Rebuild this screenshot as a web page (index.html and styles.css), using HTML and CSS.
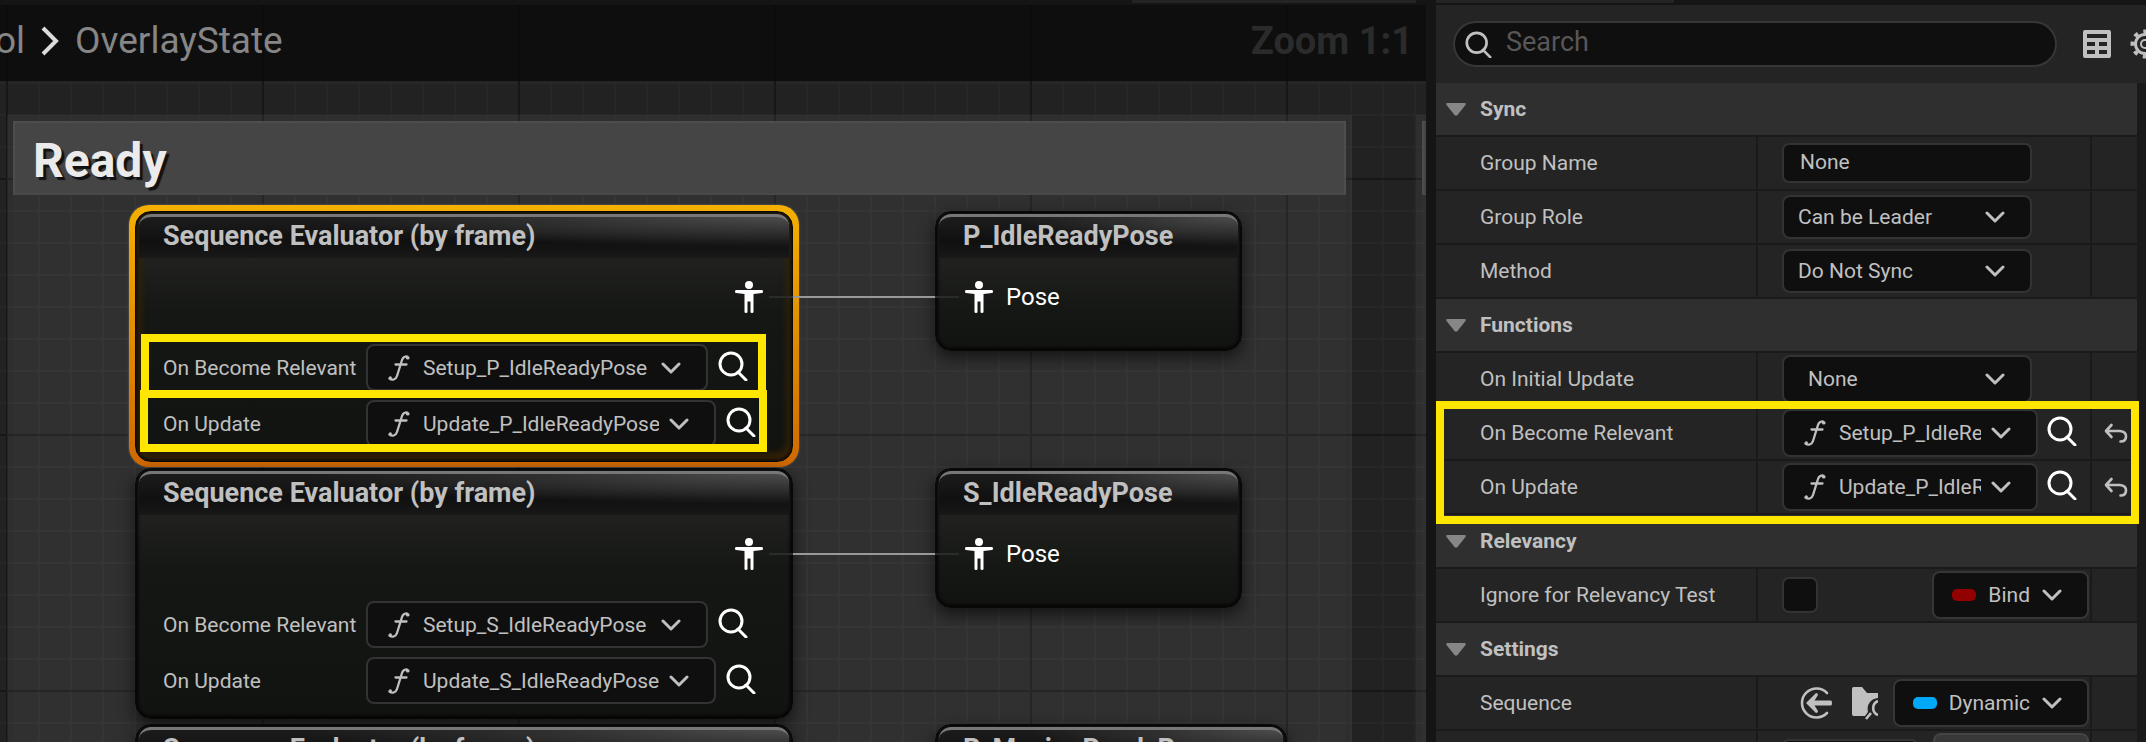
FILE: index.html
```
<!DOCTYPE html>
<html lang="en">
<head>
    <meta charset="UTF-8">
    <meta name="viewport" content="width=device-width, initial-scale=1.0">
    <title>OverlayState</title>
    <link rel="stylesheet" href="styles.css">
</head>
<body>

<!-- Shared icons -->
<svg class="sprite" aria-hidden="true">
    <symbol id="chevron" viewBox="0 0 20 12"><path d="M2 2l8 8 8-8" fill="none" stroke="currentColor" stroke-width="3" stroke-linecap="round" stroke-linejoin="round"/></symbol>
    <symbol id="search" viewBox="0 0 30 30"><circle cx="13" cy="13" r="11" fill="none" stroke="currentColor" stroke-width="3"/><path d="M20 21l8 8" stroke="currentColor" stroke-width="3" stroke-linecap="round"/></symbol>
    <symbol id="func" viewBox="0 0 22 26"><path d="M20.500 3C19.500 1 15.500 .5 14 5L9 21c-1.200 4-5 4.500-7.500 2.500M7.500 9.500h11" fill="none" stroke="currentColor" stroke-width="2.300" stroke-linecap="round"/><circle cx="19.500" cy="3" r="1.600" fill="currentColor"/><circle cx="2.300" cy="22.800" r="1.600" fill="currentColor"/></symbol>
    <symbol id="pose" viewBox="0 0 28 32"><circle cx="14" cy="4" r="4" fill="currentColor"/><path d="M1 9h26q1 0 1 1.500t-1 1.500l-8.500 1v18q0 1-1.500 1t-1.500-1V20.500h-3V31q0 1-1.500 1t-1.500-1V13L1 12q-1 0-1-1.500T1 9z" fill="currentColor"/></symbol>
    <symbol id="undo" viewBox="0 0 24 20"><path d="M7.500 2L2 8l5.500 6M2.500 8H16q6 .5 6 5.500T16.500 18.500" fill="none" stroke="currentColor" stroke-width="2.600" stroke-linecap="round" stroke-linejoin="round"/></symbol>
    <symbol id="arrow-down" viewBox="0 0 20 13"><path d="M1.500 0h17q2 0 1 2l-8 10q-1.500 1.500-3 0L.5 2q-1-2 1-2z" fill="currentColor"/></symbol>
</svg>

<div class="tabs">
    <div class="tab tab-graph"></div>
    <div class="tab tab-details"></div>
</div>

<div class="editor">
    <main class="graph">
        <!-- Comment boxes -->
        <section class="comment comment-ready">
            <h2>Ready</h2>
        </section>
        <section class="comment comment-next"></section>

        <!-- Left nodes -->
        <div class="selection">
            <article class="node">
                <h3>Sequence Evaluator (by frame)</h3>
                <div class="pin pin-out"><svg class="pose"><use href="#pose"/></svg></div>
                <div class="node-row">
                    <label for="p_relevant">On Become Relevant</label>
                    <div class="picker node-picker">
                        <select id="p_relevant"><option>Setup_P_IdleReadyPose</option></select>
                        <svg class="func"><use href="#func"/></svg>
                        <svg class="chevron"><use href="#chevron"/></svg>
                    </div>
                    <button class="icon-btn" aria-label="Find"><svg class="search"><use href="#search"/></svg></button>
                </div>
                <div class="node-row">
                    <label for="p_update">On Update</label>
                    <div class="picker node-picker wide">
                        <select id="p_update"><option>Update_P_IdleReadyPose</option></select>
                        <svg class="func"><use href="#func"/></svg>
                        <svg class="chevron"><use href="#chevron"/></svg>
                    </div>
                    <button class="icon-btn" aria-label="Find"><svg class="search"><use href="#search"/></svg></button>
                </div>
            </article>
        </div>

        <article class="node node-s">
            <h3>Sequence Evaluator (by frame)</h3>
            <div class="pin pin-out"><svg class="pose"><use href="#pose"/></svg></div>
            <div class="node-row">
                <label for="s_relevant">On Become Relevant</label>
                <div class="picker node-picker">
                    <select id="s_relevant"><option>Setup_S_IdleReadyPose</option></select>
                    <svg class="func"><use href="#func"/></svg>
                    <svg class="chevron"><use href="#chevron"/></svg>
                </div>
                <button class="icon-btn" aria-label="Find"><svg class="search"><use href="#search"/></svg></button>
            </div>
            <div class="node-row">
                <label for="s_update">On Update</label>
                <div class="picker node-picker wide">
                    <select id="s_update"><option>Update_S_IdleReadyPose</option></select>
                    <svg class="func"><use href="#func"/></svg>
                    <svg class="chevron"><use href="#chevron"/></svg>
                </div>
                <button class="icon-btn" aria-label="Find"><svg class="search"><use href="#search"/></svg></button>
            </div>
        </article>

        <article class="node node-m">
            <h3>Sequence Evaluator (by frame)</h3>
        </article>

        <!-- Pose nodes -->
        <article class="node result result-p">
            <h3>P_IdleReadyPose</h3>
            <div class="pin"><svg class="pose"><use href="#pose"/></svg>Pose</div>
        </article>
        <article class="node result result-s">
            <h3>S_IdleReadyPose</h3>
            <div class="pin"><svg class="pose"><use href="#pose"/></svg>Pose</div>
        </article>
        <article class="node result result-m">
            <h3>P_MovingReadyPose</h3>
        </article>

        <!-- Wires -->
        <div class="wire wire-p"></div>
        <div class="wire wire-s"></div>

        <div class="mark mark-relevant"></div>
        <div class="mark mark-update"></div>

        <header class="title-bar">
            <nav class="crumbs">
                <a href="#">ol</a>
                <svg class="crumb-sep" viewBox="0 0 20 30"><path d="M3 2l13 13L3 28" fill="none" stroke="#dcdcdc" stroke-width="4"/></svg>
                <a href="#">OverlayState</a>
            </nav>
            <span class="zoom">Zoom 1:1</span>
        </header>
    </main>

    <aside class="details">
        <div class="toolbar">
            <label class="search-box">
                <svg class="search-icon"><use href="#search"/></svg>
                <input type="text" placeholder="Search" aria-label="Search">
            </label>
            <button class="tool-btn" aria-label="Property matrix">
                <svg width="28" height="28" viewBox="0 0 28 28"><path fill="#c0c0c0" fill-rule="evenodd" d="M2 0h24q2 0 2 2v24q0 2-2 2H2q-2 0-2-2V2Q0 0 2 0zM4 4v4h20V4zM4 12v4h8v-4zM16 12v4h8v-4zM4 20v4h8v-4zM16 20v4h8v-4z"/></svg>
            </button>
            <button class="tool-btn" aria-label="Settings">
                <svg width="30" height="30" viewBox="0 0 30 30"><g fill="none" stroke="#c0c0c0"><circle cx="15" cy="15" r="9.500" stroke-width="3"/><circle cx="15" cy="15" r="4" stroke-width="2"/><circle cx="15" cy="15" r="12.500" stroke-width="4" stroke-dasharray="4.200 5.617" stroke-dashoffset="2.100"/></g></svg>
            </button>
        </div>

        <div class="properties">
            <h4><svg class="arrow"><use href="#arrow-down"/></svg>Sync</h4>
            <div class="row">
                <label for="group_name">Group Name</label>
                <div class="value"><input type="text" id="group_name" value="None"></div>
                <div class="reset"></div>
            </div>
            <div class="row">
                <label for="group_role">Group Role</label>
                <div class="value">
                    <div class="picker plain">
                        <select id="group_role"><option>Can be Leader</option></select>
                        <svg class="chevron"><use href="#chevron"/></svg>
                    </div>
                </div>
                <div class="reset"></div>
            </div>
            <div class="row">
                <label for="method">Method</label>
                <div class="value">
                    <div class="picker plain">
                        <select id="method"><option>Do Not Sync</option></select>
                        <svg class="chevron"><use href="#chevron"/></svg>
                    </div>
                </div>
                <div class="reset"></div>
            </div>

            <h4><svg class="arrow"><use href="#arrow-down"/></svg>Functions</h4>
            <div class="row">
                <label for="initial_update">On Initial Update</label>
                <div class="value">
                    <div class="picker none">
                        <select id="initial_update"><option>None</option></select>
                        <svg class="chevron"><use href="#chevron"/></svg>
                    </div>
                </div>
                <div class="reset"></div>
            </div>
            <div class="row">
                <label for="become_relevant">On Become Relevant</label>
                <div class="value">
                    <div class="picker function">
                        <select id="become_relevant"><option>Setup_P_IdleReadyPose</option></select>
                        <svg class="func"><use href="#func"/></svg>
                        <svg class="chevron"><use href="#chevron"/></svg>
                    </div>
                    <button class="icon-btn" aria-label="Find"><svg class="search"><use href="#search"/></svg></button>
                </div>
                <div class="reset"><button class="icon-btn" aria-label="Reset"><svg class="undo"><use href="#undo"/></svg></button></div>
            </div>
            <div class="row">
                <label for="update">On Update</label>
                <div class="value">
                    <div class="picker function">
                        <select id="update"><option>Update_P_IdleReadyPose</option></select>
                        <svg class="func"><use href="#func"/></svg>
                        <svg class="chevron"><use href="#chevron"/></svg>
                    </div>
                    <button class="icon-btn" aria-label="Find"><svg class="search"><use href="#search"/></svg></button>
                </div>
                <div class="reset"><button class="icon-btn" aria-label="Reset"><svg class="undo"><use href="#undo"/></svg></button></div>
            </div>

            <h4><svg class="arrow"><use href="#arrow-down"/></svg>Relevancy</h4>
            <div class="row">
                <label for="ignore_test">Ignore for Relevancy Test</label>
                <div class="value">
                    <input type="checkbox" id="ignore_test">
                    <button class="bind"><span class="pill red"></span>Bind<svg class="chevron"><use href="#chevron"/></svg></button>
                </div>
                <div class="reset"></div>
            </div>

            <h4><svg class="arrow"><use href="#arrow-down"/></svg>Settings</h4>
            <div class="row">
                <span class="row-name">Sequence</span>
                <div class="value">
                    <button class="icon-btn use-asset" aria-label="Use selected asset">
                        <svg width="32" height="32" viewBox="0 0 32 32"><path d="M27 6A14.500 14.500 0 1 0 27 26" fill="none" stroke="#c0c0c0" stroke-width="2.600" stroke-linecap="round"/><path d="M6 16L16 6q2 0 2 2l-3.500 5.500H31q1 0 1 2.500t-1 2.500H14.500L18 24q0 2-2 2z" fill="#c0c0c0"/></svg>
                    </button>
                    <button class="icon-btn browse" aria-label="Browse to asset">
                        <svg width="26" height="33" viewBox="0 0 26 33"><path d="M1.500 0H10l5 6h11v5a11 11 0 0 0-10 14l-3 4H1.500Q0 29 0 27V2Q0 0 1.500 0z" fill="#c0c0c0"/><path d="M26 14a7.500 7.500 0 0 0 0 14M19 26l-5 6" fill="none" stroke="#c0c0c0" stroke-width="2.600"/></svg>
                    </button>
                    <button class="bind"><span class="pill blue"></span>Dynamic<svg class="chevron"><use href="#chevron"/></svg></button>
                </div>
                <div class="reset"></div>
            </div>
            <div class="row">
                <span class="row-name"></span>
                <div class="value">
                    <input type="text" class="frame" aria-label="Value">
                    <button class="bind light" aria-label="Pin"></button>
                </div>
                <div class="reset"></div>
            </div>

            <div class="mark mark-functions"></div>
        </div>
    </aside>
</div>

</body>
</html>
```
FILE: styles.css
```
* {
    box-sizing: border-box;
}
body {
    margin: 0;
    height: 100vh;
    overflow: hidden;
    display: flex;
    flex-direction: column;
    background-color: #151515;
    color: #c0c0c0;
    font-family: Roboto, "Liberation Sans", sans-serif;
    font-size: 21px;
}
button, input, select {
    margin: 0;
    font: inherit;
    color: inherit;
}
h2, h3, h4 {
    margin: 0;
}
svg {
    display: block;
    flex: none;
}
.sprite {
    position: absolute;
    width: 0;
    height: 0;
}

/* Layout */
.tabs {
    display: grid;
    grid-template-columns: 1fr 284px 20px 238px 472px;
    height: 5px;
}
.tab {
    height: 3px;
    background-color: #242424;
}
.tab-graph {
    grid-column: 2;
}
.tab-details {
    grid-column: 4;
}
.editor {
    flex: 1;
    min-height: 0;
    display: grid;
    grid-template-columns: 1fr 710px;
    gap: 10px;
}

/* Graph */
.graph {
    position: relative;
    overflow: hidden;
    background-color: #222;
    background-image:
        linear-gradient(#171717 2px, transparent 2px),
        linear-gradient(90deg, #171717 2px, transparent 2px),
        linear-gradient(#272727 2px, transparent 2px),
        linear-gradient(90deg, #272727 2px, transparent 2px);
    background-size: 256px 256px, 256px 256px, 32px 32px, 32px 32px;
    background-position: 6px 173px, 6px 173px, 6px 13px, 6px 13px;
}
.title-bar {
    position: absolute;
    top: 0;
    left: 0;
    right: 0;
    height: 76px;
    padding: 0 13px 5px 0;
    display: flex;
    align-items: center;
    justify-content: space-between;
    background-color: rgba(8, 8, 8, 0.75);
}
.crumbs {
    display: flex;
    align-items: center;
    gap: 15px;
    margin-left: -5px;
}
.crumbs a {
    color: #868686;
    font-size: 37px;
    text-decoration: none;
}
.crumb-sep {
    width: 20px;
    height: 30px;
}
.zoom {
    color: #2b2b2b;
    font-size: 38px;
    font-weight: bold;
}
.comment {
    position: absolute;
    top: 116px;
    height: 800px;
    background-color: rgba(255, 255, 255, 0.065);
    box-shadow: 0 0 0 6px rgba(255, 255, 255, 0.055);
}
.comment::before {
    content: "";
    display: block;
    box-sizing: border-box;
    height: 74px;
    background-color: #454545;
    border: 2px solid #4d4d4d;
    border-bottom-color: #494949;
}
.comment-ready {
    left: 13px;
    width: 1333px;
}
.comment-next {
    left: 1422px;
    width: 600px;
}
.comment h2 {
    margin-top: -74px;
    padding-left: 20px;
    color: #ebebeb;
    font-size: 48px;
    line-height: 80px;
    text-shadow: 3px 3px 1px #111;
}

/* Nodes */
.node {
    width: 658px;
    height: 251px;
    padding: 2px 3px;
    border-radius: 16px;
    background: linear-gradient(#212220 44px, #151714 100px, #111310);
    border: 1px solid #080808;
    box-shadow: inset 0 0 3px 2px #050505, 0 6px 16px rgba(0, 0, 0, 0.6);
}
.node h3 {
    height: 44px;
    padding-left: 24px;
    border-top: 3px solid #777;
    border-radius: 12px 12px 0 0;
    background: radial-gradient(ellipse at 100% 0, #4c4c4c, #2f302f 26%, rgba(20, 20, 20, 0) 52%), linear-gradient(#1c1c1c, #101010 60%, #181818);
    font-size: 27px;
    line-height: 38px;
    white-space: nowrap;
    overflow: hidden;
}
.selection {
    position: absolute;
    left: 129px;
    top: 200px;
    padding: 6px 6px 5px;
    border-radius: 20px;
    background: linear-gradient(#f5b000, #e08c00 50%, #d06800);
    box-shadow: 0 0 2px #777;
}
.selection .node {
    box-shadow: inset 0 0 3px 2px #15100a, inset 0 -6px 10px #3a2205, inset 0 0 8px 4px #352a0a;
}
.node-s {
    position: absolute;
    left: 135px;
    top: 463px;
}
.node-m {
    position: absolute;
    left: 135px;
    top: 719px;
}
.result {
    position: absolute;
    left: 935px;
    width: 307px;
    height: 140px;
}
.result-p {
    top: 206px;
}
.result-s {
    top: 463px;
}
.result-m {
    top: 719px;
    width: 352px;
}
.pin {
    display: flex;
    align-items: center;
    gap: 13px;
    height: 78px;
    padding: 0 26px;
    color: #fff;
    font-size: 24px;
}
.pin-out {
    justify-content: flex-end;
    margin-bottom: 8px;
}
.pose {
    width: 28px;
    height: 32px;
}
.node-row {
    display: flex;
    align-items: center;
    height: 47px;
    margin-bottom: 9px;
    padding-left: 24px;
}
.node-row label {
    width: 203px;
    white-space: nowrap;
}
.wire {
    position: absolute;
    left: 769px;
    width: 190px;
    height: 2px;
    background: linear-gradient(90deg, #2a2c2a 24px, #999 24px, #999 166px, #2a2c2a 166px);
}
.selection ~ .wire-p {
    top: 291px;
}
.wire-s {
    top: 548px;
}

/* Controls */
.picker {
    display: grid;
    align-items: center;
}
.picker > * {
    grid-area: 1 / 1;
}
.picker select {
    width: 100%;
    height: 100%;
    appearance: none;
    border: 2px solid #333;
    border-radius: 8px;
    background-color: #0f0f0f;
    padding: 0 55px;
    outline: none;
    text-overflow: clip;
}
.picker .func {
    margin-left: 22px;
    pointer-events: none;
}
.picker .chevron {
    justify-self: end;
    margin-right: 27px;
    pointer-events: none;
}
.chevron {
    width: 20px;
    height: 12px;
}
.func {
    width: 22px;
    height: 26px;
}
.search {
    width: 30px;
    height: 30px;
}
.undo {
    width: 24px;
    height: 20px;
}
.node-picker {
    width: 342px;
    height: 47px;
}
.node-picker.wide {
    width: 350px;
}
.icon-btn {
    padding: 0;
    border: none;
    background: none;
    cursor: pointer;
}
.node-row .icon-btn {
    margin: 0 0 4px 10px;
    color: #fff;
}

/* Highlight frames */
.mark {
    position: absolute;
    border: 8px solid #ffe600;
    pointer-events: none;
}
.mark-relevant {
    left: 141px;
    top: 329px;
    width: 625px;
    height: 64px;
}
.mark-update {
    left: 140px;
    top: 385px;
    width: 627px;
    height: 62px;
}
.mark-functions {
    left: 0;
    right: -2px;
    top: 318px;
    height: 123px;
}

/* Details panel */
.details {
    background-color: #242424;
    overflow: hidden;
}
.toolbar {
    display: flex;
    align-items: center;
    height: 78px;
    padding: 0 0 0 17px;
}
.search-box {
    flex: none;
    display: flex;
    align-items: center;
    width: 604px;
    height: 46px;
    margin-right: 26px;
    padding-left: 10px;
    border: 2px solid #363636;
    border-radius: 23px;
    background-color: #0f0f0f;
}
.search-icon {
    width: 27px;
    height: 27px;
}
.search-box input {
    flex: 1;
    margin-left: 14px;
    padding: 0 0 4px;
    border: none;
    outline: none;
    background: none;
    font-size: 27px;
}
.search-box input::placeholder {
    color: #575757;
}
.tool-btn {
    flex: none;
    padding: 0;
    margin-right: 19px;
    border: none;
    background: none;
    cursor: pointer;
}
.properties {
    position: relative;
    margin-right: 9px;
    background-color: #1a1a1a;
    box-shadow: 9px 0 0 #1a1a1a;
}
.properties h4 {
    display: flex;
    align-items: center;
    gap: 14px;
    height: 52px;
    margin-bottom: 2px;
    padding-left: 10px;
    background-color: #2f2f2f;
    font-size: 21px;
}
.arrow {
    width: 20px;
    height: 13px;
    color: #868686;
}
.row {
    display: grid;
    grid-template-columns: 320px 1fr 45px;
    gap: 2px;
    height: 52px;
    margin-bottom: 2px;
}
.row > * {
    display: flex;
    align-items: center;
    background-color: #242424;
}
.row label, .row-name {
    padding-left: 44px;
}
.value {
    padding: 0 1px 0 24px;
}
.value input {
    width: 250px;
    height: 40px;
    padding: 0 16px 3px;
    border: 2px solid #333;
    border-radius: 7px;
    background-color: #0f0f0f;
    outline: none;
}
.value input[type="checkbox"] {
    width: 36px;
    height: 36px;
    padding: 0;
    appearance: none;
}
.plain, .none {
    width: 250px;
    height: 44px;
}
.plain select {
    padding: 0 14px;
}
.none {
    height: 48px;
}
.none select {
    padding: 0 24px;
}
.function {
    width: 256px;
    height: 48px;
}
.value .search {
    margin: 0 0 4px 9px;
    color: #fff;
}
.reset {
    padding-left: 12px;
}
.bind {
    display: flex;
    align-items: center;
    gap: 12px;
    height: 48px;
    margin-left: auto;
    padding: 0 25px 0 18px;
    border: 2px solid #363636;
    border-radius: 8px;
    background-color: #0f0f0f;
    cursor: pointer;
}
.pill {
    width: 24px;
    height: 12px;
    border-radius: 5px;
}
.red {
    background-color: #930000;
}
.blue {
    background-color: #00a8f8;
}
.use-asset {
    margin: 0 20px 0 18px;
}
.value input.frame {
    width: 136px;
    height: 36px;
}
.bind.light {
    width: 156px;
    background-color: #383838;
    border-color: #444;
}
```
